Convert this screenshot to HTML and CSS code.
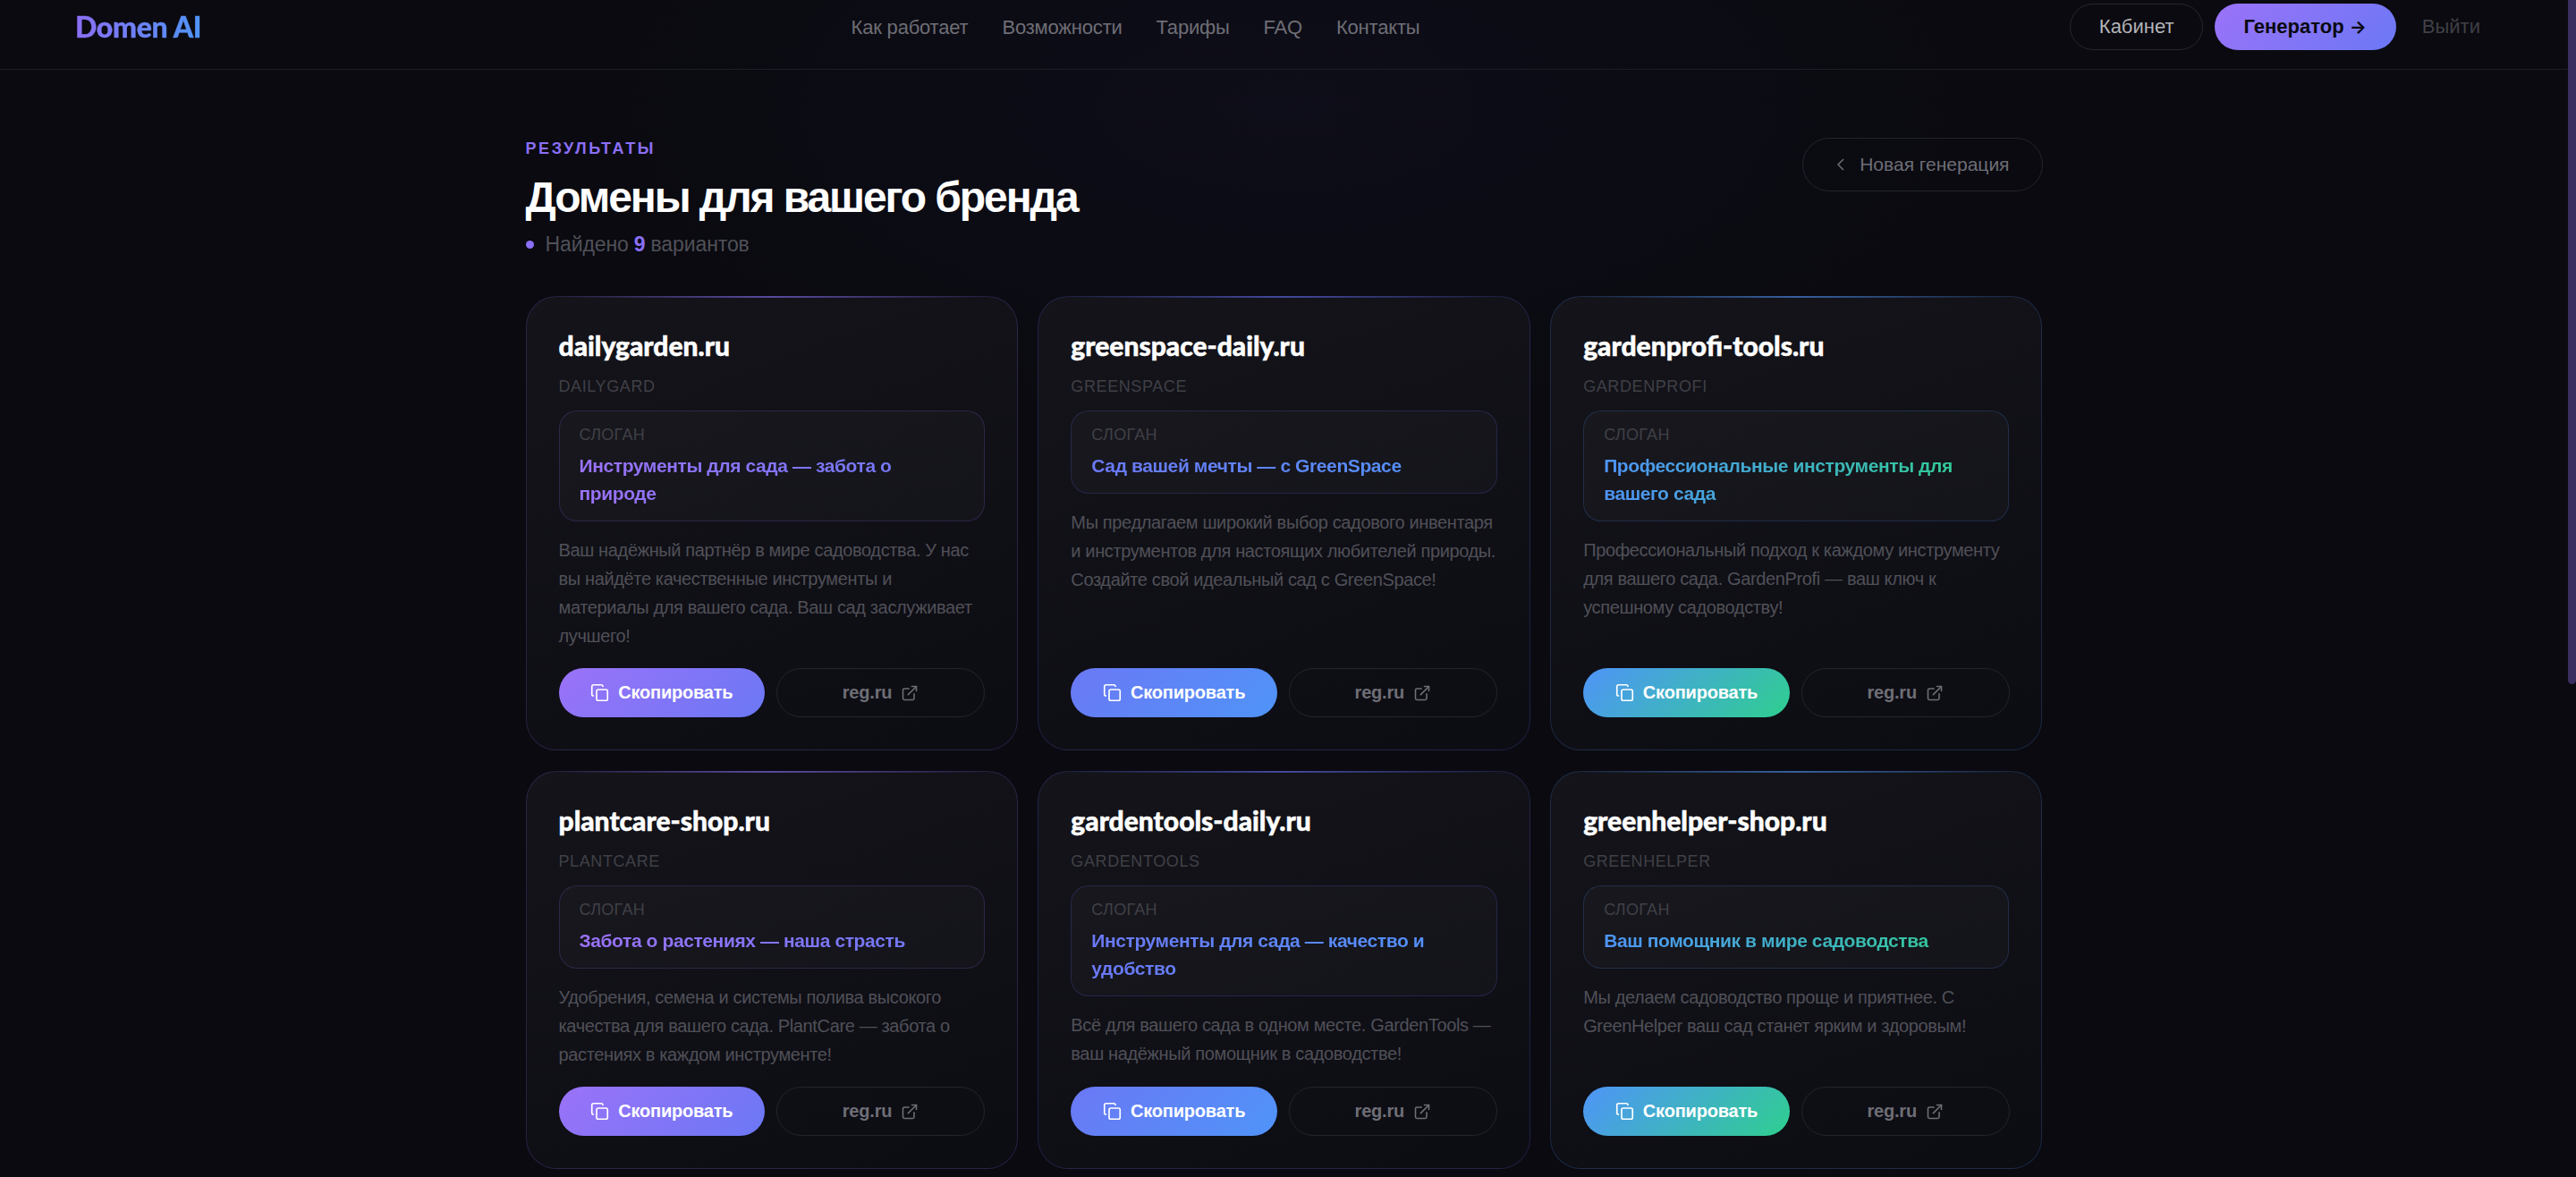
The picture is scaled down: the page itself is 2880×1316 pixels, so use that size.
FILE: index.html
```html
<!DOCTYPE html>
<html lang="ru">
<head>
  <meta charset="UTF-8" />
  <meta name="viewport" content="width=device-width, initial-scale=1.0"/>
  <title>Результаты | Domen AI</title>
  <link rel="stylesheet" href="styles.css">
</head>
<body>
  <svg class="icon-defs" aria-hidden="true">
    <symbol id="i-copy" viewBox="0 0 24 24">
      <rect x="8" y="8" width="14" height="14" rx="2"/>
      <path d="M4 16c-1.1 0-2-.9-2-2V4c0-1.1.9-2 2-2h10c1.1 0 2 .9 2 2"/>
    </symbol>
    <symbol id="i-link" viewBox="0 0 24 24">
      <path d="M15 3h6v6"/>
      <path d="M10 14 21 3"/>
      <path d="M18 13v6a2 2 0 0 1-2 2H5a2 2 0 0 1-2-2V8a2 2 0 0 1 2-2h6"/>
    </symbol>
  </svg>

  <div class="scroll-thumb"></div>

  <div class="page">
    <header class="nav">
      <a class="logo" href="#">Domen AI</a>
      <nav class="nav-links">
        <a href="#">Как работает</a>
        <a href="#">Возможности</a>
        <a href="#">Тарифы</a>
        <a href="#">FAQ</a>
        <a href="#">Контакты</a>
      </nav>
      <div class="nav-actions">
        <a class="btn-cabinet" href="#">Кабинет</a>
        <a class="btn-generator" href="#">Генератор <span class="arrow">→</span></a>
        <a class="btn-logout" href="#">Выйти</a>
      </div>
    </header>

    <main class="results">
      <div class="results-head">
        <div>
          <div class="eyebrow">Результаты</div>
          <h1>Домены для вашего бренда</h1>
          <div class="found"><span class="dot"></span>Найдено <b>9</b> вариантов</div>
        </div>
        <a class="btn-back" href="#">
          <svg class="chevron" viewBox="0 0 24 24"><path d="m15 18-6-6 6-6"/></svg>
          Новая генерация
        </a>
      </div>

      <div class="grid">
        <article class="card v1">
          <h3>dailygarden.ru</h3>
          <div class="brand">Dailygard</div>
          <div class="slogan">
            <span>Слоган</span>
            <p>Инструменты для сада — забота о природе</p>
          </div>
          <p class="desc">Ваш надёжный партнёр в мире садоводства. У нас вы найдёте качественные инструменты и материалы для вашего сада. Ваш сад заслуживает лучшего!</p>
          <div class="actions">
            <button class="btn-copy"><svg class="ico"><use href="#i-copy"/></svg>Скопировать</button>
            <a class="btn-reg" href="#">reg.ru<svg class="ico"><use href="#i-link"/></svg></a>
          </div>
        </article>

        <article class="card v2">
          <h3>greenspace-daily.ru</h3>
          <div class="brand">Greenspace</div>
          <div class="slogan">
            <span>Слоган</span>
            <p>Сад вашей мечты — с GreenSpace</p>
          </div>
          <p class="desc">Мы предлагаем широкий выбор садового инвентаря и инструментов для настоящих любителей природы. Создайте свой идеальный сад с GreenSpace!</p>
          <div class="actions">
            <button class="btn-copy"><svg class="ico"><use href="#i-copy"/></svg>Скопировать</button>
            <a class="btn-reg" href="#">reg.ru<svg class="ico"><use href="#i-link"/></svg></a>
          </div>
        </article>

        <article class="card v3">
          <h3>gardenprofi-tools.ru</h3>
          <div class="brand">Gardenprofi</div>
          <div class="slogan">
            <span>Слоган</span>
            <p>Профессиональные инструменты для вашего сада</p>
          </div>
          <p class="desc">Профессиональный подход к каждому инструменту для вашего сада. GardenProfi — ваш ключ к успешному садоводству!</p>
          <div class="actions">
            <button class="btn-copy"><svg class="ico"><use href="#i-copy"/></svg>Скопировать</button>
            <a class="btn-reg" href="#">reg.ru<svg class="ico"><use href="#i-link"/></svg></a>
          </div>
        </article>

        <article class="card v1">
          <h3>plantcare-shop.ru</h3>
          <div class="brand">Plantcare</div>
          <div class="slogan">
            <span>Слоган</span>
            <p>Забота о растениях — наша страсть</p>
          </div>
          <p class="desc">Удобрения, семена и системы полива высокого качества для вашего сада. PlantCare — забота о растениях в каждом инструменте!</p>
          <div class="actions">
            <button class="btn-copy"><svg class="ico"><use href="#i-copy"/></svg>Скопировать</button>
            <a class="btn-reg" href="#">reg.ru<svg class="ico"><use href="#i-link"/></svg></a>
          </div>
        </article>

        <article class="card v2">
          <h3>gardentools-daily.ru</h3>
          <div class="brand">Gardentools</div>
          <div class="slogan">
            <span>Слоган</span>
            <p>Инструменты для сада — качество и удобство</p>
          </div>
          <p class="desc">Всё для вашего сада в одном месте. GardenTools — ваш надёжный помощник в садоводстве!</p>
          <div class="actions">
            <button class="btn-copy"><svg class="ico"><use href="#i-copy"/></svg>Скопировать</button>
            <a class="btn-reg" href="#">reg.ru<svg class="ico"><use href="#i-link"/></svg></a>
          </div>
        </article>

        <article class="card v3">
          <h3>greenhelper-shop.ru</h3>
          <div class="brand">Greenhelper</div>
          <div class="slogan">
            <span>Слоган</span>
            <p>Ваш помощник в мире садоводства</p>
          </div>
          <p class="desc">Мы делаем садоводство проще и приятнее. С GreenHelper ваш сад станет ярким и здоровым!</p>
          <div class="actions">
            <button class="btn-copy"><svg class="ico"><use href="#i-copy"/></svg>Скопировать</button>
            <a class="btn-reg" href="#">reg.ru<svg class="ico"><use href="#i-link"/></svg></a>
          </div>
        </article>
      </div>
    </main>
  </div>
</body>
</html>
```

FILE: styles.css
```css
:root {
  --bg: #0a0a10;
  --line: #1d1d25;
  --muted: #6e6e76;
  --dim: #505058;
  --faint: #404047;
  --purple: #8b6ff6;
  --violet-a: #9b72f8;
  --indigo: #6b78f5;
  --blue: #4f94f8;
  --green: #2fcf8f;
}

* {
  box-sizing: border-box;
  margin: 0;
  padding: 0;
}

html, body {
  height: 100%;
  overflow: hidden;
}

body {
  font-family: "Liberation Sans", Arial, sans-serif;
  background-color: var(--bg);
  color: #fff;
}

a {
  text-decoration: none;
  color: inherit;
}

.icon-defs {
  display: none;
}

/* the page's own scrollbar, drawn over the right edge */
.scroll-thumb {
  position: fixed;
  top: 0;
  right: 0;
  width: 9px;
  height: 765px;
  border-radius: 0 0 5px 5px;
  background: #3a2d5f;
}

.page {
  height: 100vh;
  padding-right: 9px;
  overflow: hidden;
  background:
    radial-gradient(1100px 500px at 50% 120px, rgba(90, 80, 200, 0.05), transparent 70%),
    var(--bg);
}

/* top bar */
.nav {
  height: 78px;
  padding: 4px 84px 0;
  display: flex;
  justify-content: space-between;
  align-items: flex-start;
  border-bottom: 1px solid var(--line);
}

.logo {
  line-height: 52px;
  font-family: Lato, sans-serif;
  font-weight: 900;
  font-size: 32px;
  letter-spacing: -0.3px;
  -webkit-text-stroke: 0.4px transparent;
  background: linear-gradient(90deg, var(--purple), var(--blue));
  -webkit-background-clip: text;
  background-clip: text;
  color: transparent;
}

.nav-links {
  display: flex;
  gap: 38px;
  line-height: 54px;
  font-size: 22px;
  letter-spacing: -0.2px;
  color: var(--muted);
}

.nav-actions {
  display: flex;
  align-items: center;
  gap: 13px;
  font-size: 22px;
  line-height: 26px;
}

.btn-cabinet {
  padding: 12px 32px;
  border: 1px solid #26262e;
  border-radius: 26px;
  color: #b4b4b9;
}

.btn-generator {
  padding: 13px 33px 13px 32px;
  border-radius: 26px;
  color: #0a0a10;
  font-weight: 700;
  background: linear-gradient(135deg, var(--violet-a), var(--indigo));
}

.arrow {
  font-family: Inter, sans-serif;
  font-size: 20px;
}

.btn-logout {
  padding: 0 14px 0 16px;
  color: var(--faint);
}

/* results */
.results {
  width: 1696px;
  margin: 0 auto;
  padding-top: 77px;
}

.results-head {
  display: flex;
  justify-content: space-between;
  align-items: flex-start;
  margin-bottom: 40px;
}

.eyebrow {
  font-size: 18px;
  line-height: 22px;
  font-weight: 700;
  letter-spacing: 2.6px;
  text-transform: uppercase;
  color: var(--purple);
}

h1 {
  margin-top: 14px;
  font-size: 48px;
  line-height: 60px;
  font-weight: 700;
  letter-spacing: -2.1px;
}

.found {
  margin-top: 4px;
  display: flex;
  align-items: center;
  gap: 6px;
  font-size: 23px;
  line-height: 36px;
  letter-spacing: -0.1px;
  color: var(--dim);
}

.found b {
  color: var(--purple);
}

.dot {
  width: 9px;
  height: 9px;
  margin-right: 7px;
  border-radius: 50%;
  background: var(--purple);
}

.btn-back {
  margin-top: -1px;
  height: 60px;
  padding: 0 36px 0 30px;
  display: flex;
  align-items: center;
  gap: 9px;
  border: 1px solid #24242c;
  border-radius: 30px;
  font-size: 21px;
  color: var(--muted);
}

.chevron {
  width: 24px;
  height: 24px;
  fill: none;
  stroke: var(--muted);
  stroke-width: 1.5;
}

.grid {
  display: grid;
  grid-template-columns: repeat(3, 1fr);
  gap: 23px 22.5px;
}

.card {
  --from: var(--violet-a);
  --to: var(--indigo);
  --edge: 139, 111, 246;
  position: relative;
  padding: 34px 36px 36px;
  display: flex;
  flex-direction: column;
  border: 1px solid rgba(var(--edge), 0.2);
  border-radius: 34px;
  background: linear-gradient(160deg, #14141a, #0c0c13);
}

.card::before {
  content: "";
  position: absolute;
  top: -1px;
  left: 34px;
  right: 34px;
  height: 2px;
  background: linear-gradient(90deg, transparent, rgba(var(--edge), 0.55), transparent);
}

.card.v2 {
  --from: var(--indigo);
  --to: var(--blue);
  --edge: 100, 110, 245;
}

.card.v3 {
  --from: var(--blue);
  --to: var(--green);
  --edge: 79, 148, 248;
}

.card h3 {
  font-family: Lato, sans-serif;
  font-size: 30px;
  line-height: 40px;
  font-weight: 900;
  -webkit-text-stroke: 0.5px #fff;
}

.brand {
  margin-top: 14px;
  font-size: 18px;
  line-height: 24px;
  letter-spacing: 0.6px;
  text-transform: uppercase;
  color: var(--faint);
}

.slogan {
  margin-top: 15px;
  padding: 14px 22px 15px;
  border: 1px solid rgba(var(--edge), 0.2);
  border-radius: 20px;
  background: rgba(255, 255, 255, 0.025);
}

.slogan span {
  display: block;
  font-size: 18px;
  line-height: 24px;
  letter-spacing: 0.3px;
  text-transform: uppercase;
  color: var(--faint);
}

.slogan p {
  margin-top: 7px;
  font-size: 21px;
  line-height: 31px;
  font-weight: 700;
  letter-spacing: -0.4px;
  background: linear-gradient(90deg, var(--from), var(--to));
  -webkit-background-clip: text;
  background-clip: text;
  color: transparent;
}

.desc {
  margin-top: 16px;
  font-size: 20px;
  line-height: 32px;
  letter-spacing: -0.36px;
  color: var(--dim);
}

.actions {
  margin-top: auto;
  padding-top: 20px;
  display: flex;
  gap: 13px;
}

.btn-copy,
.btn-reg {
  flex: 1;
  height: 55px;
  display: flex;
  align-items: center;
  justify-content: center;
  gap: 10px;
  border-radius: 28px;
  font-family: inherit;
  font-size: 20px;
  letter-spacing: -0.2px;
  font-weight: 700;
}

.btn-copy {
  border: none;
  color: #fff;
  background: linear-gradient(135deg, var(--from), var(--to));
}

.btn-reg {
  border: 1px solid #24242c;
  color: var(--muted);
}

.ico {
  width: 21px;
  height: 21px;
  fill: none;
  stroke: currentColor;
  stroke-width: 1.9;
  stroke-linecap: round;
  stroke-linejoin: round;
}

.btn-reg .ico {
  width: 20px;
  height: 20px;
}
```
